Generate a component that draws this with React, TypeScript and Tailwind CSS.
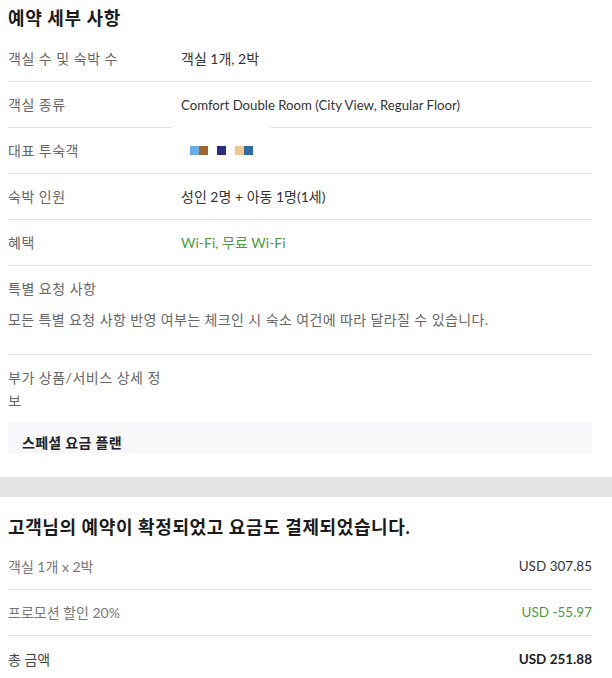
import React from "react";

const FONT = { fontFamily: '"Lato", "Noto Sans CJK KR", sans-serif' };

function Row({ label, children, last }: { label: string; children?: React.ReactNode; last?: boolean }) {
  return (
    <div className={`flex h-[46px] items-center ${last ? "" : "border-b border-[#e1e1e1]"}`}>
      <div className="w-[173px] shrink-0 text-[14px] tracking-[0.5px] text-[#666]">{label}</div>
      <div className="text-[14px] text-[#333]">{children}</div>
    </div>
  );
}

function PriceRow({ label, value, valueClass, labelClass, last }: { label: string; value: string; valueClass?: string; labelClass?: string; last?: boolean }) {
  return (
    <div className={`flex h-[46px] items-center justify-between ${last ? "" : "border-b border-[#e1e1e1]"}`}>
      <div className={`text-[14px] ${labelClass ?? "text-[#777]"}`}>{label}</div>
      <div className={`text-[13.5px] ${valueClass ?? "text-[#333]"}`}>{value}</div>
    </div>
  );
}

export default function App() {
  return (
    <div className="w-[612px] min-h-[678px] bg-white" style={FONT}>
      <section className="pl-[8px] pr-[20px]">
        <h2 className="flex h-[36px] items-center text-[18px] font-bold tracking-[0.6px] text-[#1a1a1a]">예약 세부 사항</h2>
        <Row label="객실 수 및 숙박 수">객실 1개, 2박</Row>
        <div className="relative">
          <Row label="객실 종류">
            <span className="text-[13.2px]">Comfort Double Room (City View, Regular Floor)</span>
          </Row>
          <span className="absolute bottom-0 left-[164px] h-px w-[98px] bg-white" />
        </div>
        <Row label="대표 투숙객">
          <div className="flex items-center pl-[9px]">
            <span className="h-[9px] w-[9px] bg-[#6aaee6]" />
            <span className="h-[9px] w-[9px] bg-[#a2652f]" />
            <span className="ml-[9px] h-[9px] w-[9px] bg-[#2b2d82]" />
            <span className="ml-[9px] h-[9px] w-[9px] bg-[#f0c58e]" />
            <span className="h-[9px] w-[9px] bg-[#2f6ba6]" />
          </div>
        </Row>
        <Row label="숙박 인원">성인 2명 + 아동 1명(1세)</Row>
        <Row label="혜택">
          <span className="text-[#4e9a3c]">Wi-Fi, 무료 Wi-Fi</span>
        </Row>
        <div className="border-b border-[#e1e1e1] pb-[23px] pt-[11px]">
          <div className="text-[14px] leading-[23px] tracking-[0.5px] text-[#666]">특별 요청 사항</div>
          <div className="mt-[8px] text-[14px] leading-[23px] tracking-[0.4px] text-[#666]">
            모든 특별 요청 사항 반영 여부는 체크인 시 숙소 여건에 따라 달라질 수 있습니다.
          </div>
        </div>
        <div className="pt-[11px]">
          <div className="w-[156px] text-[14px] leading-[23px] tracking-[0.5px] text-[#666]">부가 상품/서비스 상세 정보</div>
          <div className="mt-[11px] h-[30px] overflow-hidden bg-[#f7f7f9] pl-[14px] pt-[10px]">
            <div className="text-[14px] font-semibold leading-[20px] tracking-[0.3px] text-[#222]">스페셜 요금 플랜</div>
          </div>
        </div>
        <div className="h-[24px]" />
      </section>
      <div className="h-[20px] bg-[#e4e4e4]" />
      <section className="pl-[8px] pr-[20px]">
        <h2 className="pb-[7px] pt-[20px] text-[18px] font-bold leading-[20px] tracking-[0.6px] text-[#1a1a1a]">
          고객님의 예약이 확정되었고 요금도 결제되었습니다.
        </h2>
        <PriceRow label="객실 1개 x 2박" value="USD 307.85" />
        <PriceRow label="프로모션 할인 20%" value="USD -55.97" valueClass="text-[#4e9a3c]" />
        <PriceRow label="총 금액" value="USD 251.88" labelClass="text-[#444]" valueClass="font-bold text-[#222]" last />
      </section>
    </div>
  );
}
